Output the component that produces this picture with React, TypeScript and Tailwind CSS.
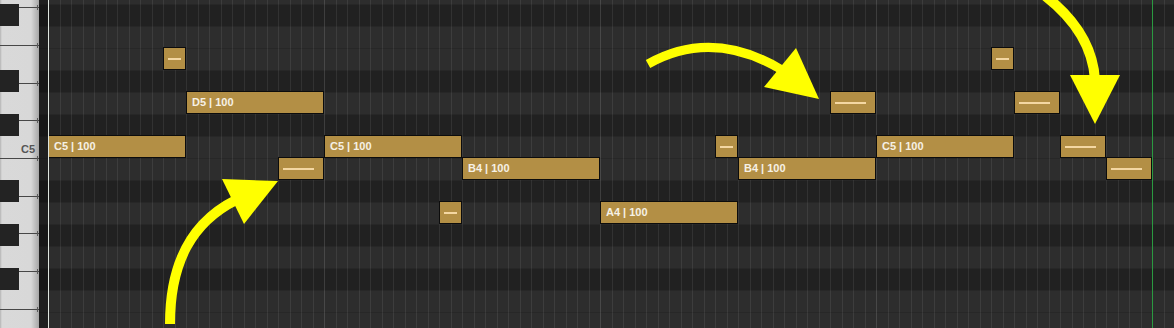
import React from 'react';

// piano roll rows, top to bottom; first row starts 18px above the window
const ROWS = ['G5', 'F#5', 'F5', 'E5', 'D#5', 'D5', 'C#5', 'C5', 'B4', 'A#4', 'A4', 'G#4', 'G4', 'F#4', 'F4', 'E4'];
const UNIT = 11.5;
const ROW_H = 22;

interface Note {
  u: number;
  len: number;
  row: string;
  label?: string;
}

const NOTES: Note[] = [
  { u: 0, len: 12, row: 'C5', label: 'C5 | 100' },
  { u: 10, len: 2, row: 'E5' },
  { u: 12, len: 12, row: 'D5', label: 'D5 | 100' },
  { u: 20, len: 4, row: 'B4' },
  { u: 24, len: 12, row: 'C5', label: 'C5 | 100' },
  { u: 34, len: 2, row: 'A4' },
  { u: 36, len: 12, row: 'B4', label: 'B4 | 100' },
  { u: 48, len: 12, row: 'A4', label: 'A4 | 100' },
  { u: 58, len: 2, row: 'C5' },
  { u: 60, len: 12, row: 'B4', label: 'B4 | 100' },
  { u: 68, len: 4, row: 'D5' },
  { u: 72, len: 12, row: 'C5', label: 'C5 | 100' },
  { u: 82, len: 2, row: 'E5' },
  { u: 84, len: 4, row: 'D5' },
  { u: 88, len: 4, row: 'C5' },
  { u: 92, len: 4, row: 'B4' },
];

// white key boundaries, one octave = 12 rows split into 7 keys
const KEY_LINES = [-4, -3, -2, -1, 0, 1, 2, 3, 4].map((k) => 158 + (k * 12 * ROW_H) / 7);

const isBlack = (r: string) => r.includes('#');

function Piano() {
  return (
    <div className="relative w-[39px] h-full shrink-0 overflow-hidden bg-[linear-gradient(90deg,#b4b4b4_0px,#d9d9d9_2px,#d8d8d8_31px,#a6a6a6_39px)]">
      {KEY_LINES.map((y) => (
        <div key={y} className="absolute left-0 right-0 h-px bg-[#474747]" style={{ top: Math.round(y) }}>
          <div className="absolute right-[1px] -top-[2px] w-px h-[5px] bg-[#5a5a5a]" />
        </div>
      ))}
      <div className="flex flex-col -mt-[18px]">
        {ROWS.map((r) => (
          <div key={r} className="h-[22px] shrink-0 flex items-center justify-end">
            {isBlack(r) ? (
              <div className="relative z-10 mr-auto w-[19px] h-full bg-[#232323]" />
            ) : r === 'C5' ? (
              <span className="pr-[4px] pt-[5px] text-[11px] leading-none font-bold text-[#555555] font-['Liberation_Sans',Arial,sans-serif]">
                C5
              </span>
            ) : null}
          </div>
        ))}
      </div>
    </div>
  );
}

function NoteBlock({ note }: { note: Note }) {
  const top = -19 + ROWS.indexOf(note.row) * ROW_H;
  return (
    <div
      className="absolute box-border border border-[#0c0c0c] bg-[#b38f45] flex items-center overflow-hidden"
      style={{ left: note.u * UNIT, top, width: note.len * UNIT, height: 23 }}
    >
      {note.label ? (
        <span className="pl-[5px] text-[11px] leading-none font-bold text-[#f6f1e6] whitespace-nowrap font-['Liberation_Sans',Arial,sans-serif]">
          {note.label}
        </span>
      ) : (
        <div className={`ml-[4px] h-[2px] bg-[#f4d7a2] ${note.len > 2 ? 'w-[31px]' : 'w-[13px]'}`} />
      )}
    </div>
  );
}

function Arrows() {
  return (
    <svg className="absolute inset-0 pointer-events-none" width="1174" height="328" viewBox="0 0 1174 328">
      <g fill="#ffff00" stroke="none">
        <polygon points="222,179 278,181 244,224" />
        <polygon points="796,48 819,99 764,87" />
        <polygon points="1070,75 1120,75 1095,124" />
      </g>
      <g fill="none" stroke="#ffff00" strokeWidth="10">
        <path d="M170 324 C 170 262, 192 222, 236 200" />
        <path d="M648 64 Q 712 28 782 70" strokeWidth="9" />
        <path d="M1040 -8 Q 1092 30 1095 80" />
      </g>
    </svg>
  );
}

export default function App() {
  const cols = Array.from({ length: 98 }, (_, i) => i);
  return (
    <div className="relative w-[1174px] h-[328px] overflow-hidden flex bg-[#1e1e1e]">
      <Piano />

      {/* Grid */}
      <div className="relative flex-1 h-full overflow-hidden">
        <div className="flex flex-col -mt-[18px]">
          {ROWS.map((r) => (
            <div
              key={r}
              className={`h-[22px] shrink-0 border-t border-[#272727] ${isBlack(r) ? 'bg-[#212121]' : 'bg-[#2d2d2d]'}`}
            />
          ))}
        </div>

        {/* shadow under the keys */}
        <div className="absolute left-0 top-0 bottom-0 w-[9px] bg-black/30" />

        <div className="absolute left-[9px] top-0 bottom-0 right-0">
          <div className="absolute inset-0 flex">
            {cols.map((i) => (
              <div
                key={i}
                className={`w-[11.5px] shrink-0 h-full border-l ${i % 24 === 0 ? 'border-white/[0.13]' : 'border-white/[0.08]'}`}
              />
            ))}
          </div>
          {NOTES.map((n, i) => (
            <NoteBlock key={i} note={n} />
          ))}
        </div>

        <div className="absolute left-[9px] top-0 bottom-0 w-px bg-[#dfe6df]" />
        <div className="absolute left-[1113px] top-0 bottom-0 w-px bg-[#2a9a40]" />
      </div>

      <Arrows />
    </div>
  );
}
